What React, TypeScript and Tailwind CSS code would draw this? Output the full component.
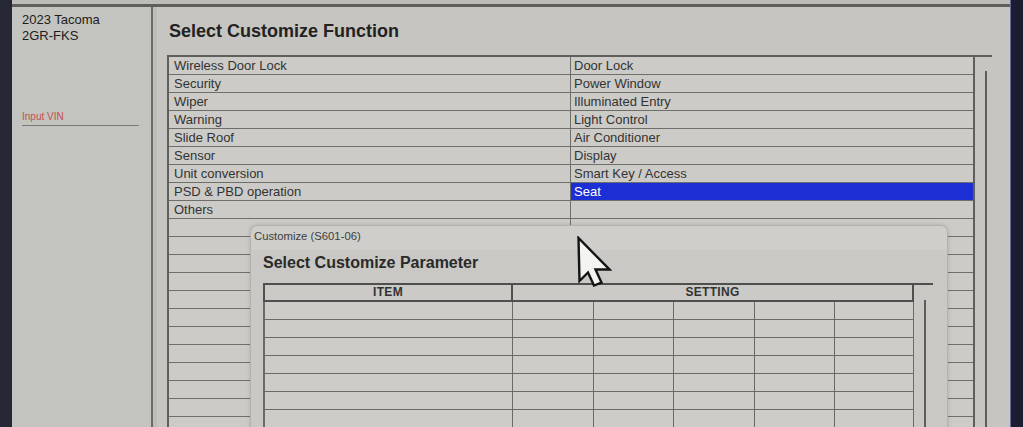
import React from "react";

const leftItems = [
  "Wireless Door Lock",
  "Security",
  "Wiper",
  "Warning",
  "Slide Roof",
  "Sensor",
  "Unit conversion",
  "PSD & PBD operation",
  "Others",
];

const rightItems = [
  "Door Lock",
  "Power Window",
  "Illuminated Entry",
  "Light Control",
  "Air Conditioner",
  "Display",
  "Smart Key / Access",
  "Seat",
  "",
];

const mainRows = Array.from({ length: 21 }, (_, i) => ({
  left: leftItems[i] ?? "",
  right: rightItems[i] ?? "",
}));

function Cursor() {
  return (
    <svg
      className="absolute left-[576px] top-[236px]"
      width="36"
      height="52"
      viewBox="0 0 36 52"
    >
      <path
        d="M2.5 2 L3.5 45 L12 36.5 L18 49.5 L25.5 46.5 L19.5 33.5 L33.5 33.5 Z"
        fill="#f4f4f2"
        stroke="#141414"
        strokeWidth="2.4"
        strokeLinejoin="miter"
      />
    </svg>
  );
}

function CustomizeDialog() {
  const bodyRows = Array.from({ length: 7 });
  return (
    <div className="absolute left-[250px] top-[225px] w-[698px] h-[210px] rounded-t-[7px] bg-[#c9c8c4] border border-[#b3b2ae] shadow-[0_0_4px_rgba(0,0,0,0.15)] flex flex-col">
      <div className="h-[24px] pl-[3px] rounded-t-[7px] bg-[#cfceca] text-[11.3px] leading-[20px] text-[#3e3e3e]">
        Customize (S601-06)
      </div>
      <div className="pl-[12px] pt-[3px]">
        <div className="text-[16px] leading-[20px] font-bold text-[#2a2a2a]">
          Select Customize Parameter
        </div>
        <div className="mt-[10px] flex">
          <div className="w-[651px] flex flex-col">
            <div className="h-[19px] border-2 border-[#4f4f4d] bg-[#cbcac6] grid grid-cols-[248px_1fr] text-[12px] font-bold tracking-[0.3px] text-[#333] leading-[15px]">
              <div className="border-r-2 border-[#4f4f4d] text-center">ITEM</div>
              <div className="text-center">SETTING</div>
            </div>
            {bodyRows.map((_, i) => (
              <div
                key={i}
                className="h-[18px] border-l-2 border-r border-b border-[#6a6a67] grid grid-cols-[248px_81px_80px_81px_80px_1fr] bg-[#cdccc8]"
              >
                <div className="border-r border-[#6a6a67]" />
                <div className="border-r border-[#6a6a67]" />
                <div className="border-r border-[#6a6a67]" />
                <div className="border-r border-[#6a6a67]" />
                <div className="border-r border-[#6a6a67]" />
                <div />
              </div>
            ))}
          </div>
          <div className="w-[19px] flex flex-col">
            <div className="w-[19px] border-t-2 border-[#4f4f4d]" />
            <div className="ml-[10px] mt-[15px] w-[2px] flex-1 bg-[#5c5c5a]" />
          </div>
        </div>
      </div>
    </div>
  );
}

export default function App() {
  return (
    <div className="relative w-[1023px] h-[427px] overflow-hidden flex bg-[#1f2130] font-['Liberation_Sans',Arial,sans-serif]">
      <div className="w-[12px] shrink-0 bg-[#252834]" />
      <div className="w-[998px] shrink-0 flex flex-col">
        <div className="h-[4px] shrink-0 bg-[#bdbcb8]" />
        <div className="h-[3px] shrink-0 bg-[#5f5f5c]" />
        <div className="flex flex-1 min-h-0 overflow-hidden">
          {/* vehicle panel */}
          <div className="w-[141px] shrink-0 border-r-2 border-[#6a6a67] bg-[#c3c3bf] pl-[10px] pt-[5px] flex flex-col">
            <div className="text-[13px] leading-[16px] text-[#1c1c1c]">2023 Tacoma</div>
            <div className="text-[13px] leading-[16px] text-[#1c1c1c]">2GR-FKS</div>
            <div className="mt-[67px] w-[117px] border-b border-[#7a7a77] pb-[2px] text-[10px] leading-[12px] text-[#c4504e]">
              Input VIN
            </div>
          </div>
          <div className="w-[4px] shrink-0 bg-[#bebdb9]" />
          {/* main panel */}
          <div className="flex-1 min-h-0 bg-[#c6c5c1] pl-[10px] pt-[13px] flex flex-col">
            <div className="shrink-0 text-[18px] leading-[22px] font-bold text-[#222] pl-[2px]">
              Select Customize Function
            </div>
            <div className="mt-[13px] flex flex-1 min-h-0">
              <div className="w-[808px] shrink-0 border-t-2 border-l-2 border-r-2 border-[#5e5e5b] flex flex-col">
                {mainRows.map((row, i) => {
                  const selected = row.right === "Seat";
                  return (
                    <div
                      key={i}
                      className="h-[18px] shrink-0 grid grid-cols-[402px_1fr] border-b border-[#6e6e6b] text-[13px] leading-[17px]"
                    >
                      <div className="border-r border-[#6e6e6b] bg-[#cccbc7] pl-[5px] text-[#333]">
                        {row.left}
                      </div>
                      <div
                        className={
                          selected
                            ? "bg-[#1b2fd4] pl-[3px] text-white"
                            : "bg-[#cccbc7] pl-[3px] text-[#333]"
                        }
                      >
                        {row.right}
                      </div>
                    </div>
                  );
                })}
              </div>
              <div className="w-[35px] flex flex-col">
                <div className="w-[17px] border-t-2 border-[#5e5e5b]" />
                <div className="ml-[10px] mt-[14px] w-[2px] flex-1 bg-[#5c5c5a]" />
              </div>
            </div>
          </div>
        </div>
      </div>
      <div className="w-[13px] shrink-0 bg-[#1c1d30] border-l border-[#6c6c9a]" />
      <CustomizeDialog />
      <Cursor />
    </div>
  );
}
